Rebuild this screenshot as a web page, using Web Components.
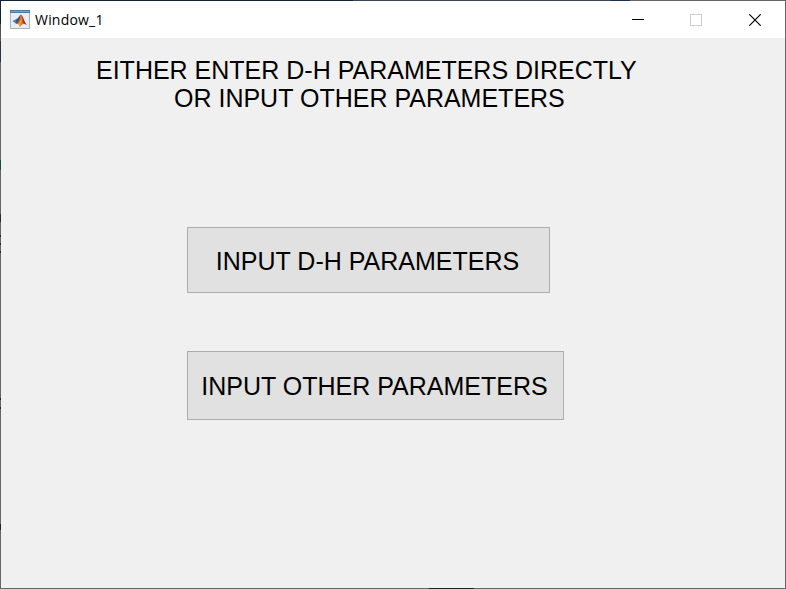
<!DOCTYPE html>
<html lang="en">
<head>
<meta charset="utf-8">
<title>Window_1</title>
<style>
html,body{margin:0;height:100%;overflow:hidden}
</style>
</head>
<body>
<app-window>
  <title-bar slot="title">Window_1</title-bar>
  <info-heading>
    <span>EITHER ENTER D-H PARAMETERS DIRECTLY</span>
    <span>OR INPUT OTHER PARAMETERS</span>
  </info-heading>
  <button-stack>
    <push-button style="--w:363px;--h:66px">INPUT D-H PARAMETERS</push-button>
    <push-button style="--w:377px;--h:69px">INPUT OTHER PARAMETERS</push-button>
  </button-stack>
</app-window>
<script>
const define = (name, html) => customElements.define(name, class extends HTMLElement {
  constructor() {
    super();
    this.attachShadow({ mode: "open" }).innerHTML = html;
  }
});

define("app-window", `
<style>
:host{display:flex;flex-direction:column;box-sizing:border-box;width:786px;height:589px;border:1px solid #666;
 background:#f0f0f0;color:#000;font-family:"Liberation Sans",Arial,sans-serif;position:relative}
.edge{position:absolute;height:1px}
.top{left:-1px;top:-1px;width:630px;background:linear-gradient(90deg,#14213a 0 56%,#3a4658 56% 97%,#163050 97%)}
.bottom{left:428px;bottom:-1px;width:45px;background:#222}
.left{position:absolute;left:-1px;top:-1px;width:1px;height:588px;
 background:linear-gradient(#14213a 0 24px,#555 24px 41px,#273546 41px 62px,#666 62px 160px,#14503c 160px 170px,#666 170px 214px,#402818 214px 218px,#182848 218px 222px,#666 222px 235px,#222 235px 237px,#666 237px 243px,#222 243px 245px,#666 245px 251px,#222 251px 253px,#666 253px 398px,#222 398px 400px,#666 400px 407px,#222 407px 409px,#666 409px 524px,#222 524px 530px,#666 530px)}
</style>
<slot name="title"></slot><slot></slot>
<div class="edge top"></div><div class="edge bottom"></div><div class="left"></div>`);

define("title-bar", `
<style>
:host{display:flex;align-items:center;height:37px;background:#fff;font:14px/20px "Open Sans","Noto Sans",sans-serif}
svg{display:block;flex:none}
.icon{margin-left:9px}
.name{margin-left:5px;flex:1;letter-spacing:.2px}
.ctl{display:flex}
.controls{display:flex;gap:46px;margin-right:24px}
.ctl:last-child{margin-left:1px}
</style>
<svg class="icon" width="20" height="20" viewBox="0 0 20 20">
 <rect x=".5" y=".5" width="19" height="18" fill="#e9edf1" stroke="#a9b3bd"/>
 <rect width="20" height="3" fill="#477aa7"/><rect x="1" y="1" width="18" height="1" fill="#75a2c6"/>
 <path d="M2.5 11 6.5 9 9 12 6 13.7Z" fill="#3f80b6"/>
 <path d="M6.5 9C8.5 8.5 9 5.5 11 4.5L10 9 8 13 6 13.7Z" fill="#355675"/>
 <path d="M11 4.5C12.5 5 14 12 17 15.2 14.3 12.6 12.5 13.8 10 17 9.5 14.5 8.5 13.5 6 13.7 9.5 12 10 7 11 4.5Z" fill="#de6420"/>
 <path d="M11 4.7C11.3 9 10 13 8 13.7L10 16.5C12 14 12.2 9 11 4.7Z" fill="#f6a13a"/>
 <path d="M11.3 4.7C13 6 14 12 17 15.2L13.5 13.3Z" fill="#a62b20"/>
</svg>
<span class="name"><slot></slot></span>
<div class="controls">
 <div class="ctl"><svg width="12" height="12"><path d="M0 5.5H12" stroke="#000"/></svg></div>
 <div class="ctl"><svg width="12" height="12"><path d="M.5.5H11.5V11.5H.5Z" fill="none" stroke="#ccc"/></svg></div>
 <div class="ctl"><svg width="12" height="12"><path d="M.3.3 11.7 11.7M11.7.3.3 11.7" stroke="#000" stroke-width="1.15"/></svg></div>
</div>`);

define("info-heading", `
<style>
:host{display:flex;flex-direction:column;align-items:flex-start;padding:18px 0 0 95px;font-size:25px;line-height:28px;white-space:nowrap}
::slotted(span:last-child){margin-left:78px}
</style><slot></slot>`);

define("button-stack", `
<style>
:host{display:flex;flex-direction:column;align-items:flex-start;gap:58px;padding:115px 0 0 186px}
</style><slot></slot>`);

define("push-button", `
<style>
:host{display:block}
button{display:flex;align-items:center;justify-content:center;box-sizing:border-box;width:var(--w);height:var(--h);
 margin:0;padding:1px 2px 0 0;border:1px solid #adadad;background:#e1e1e1;color:#000;font:25px/28px "Liberation Sans",Arial,sans-serif;white-space:nowrap}
</style><button><slot></slot></button>`);
</script>
</body>
</html>
